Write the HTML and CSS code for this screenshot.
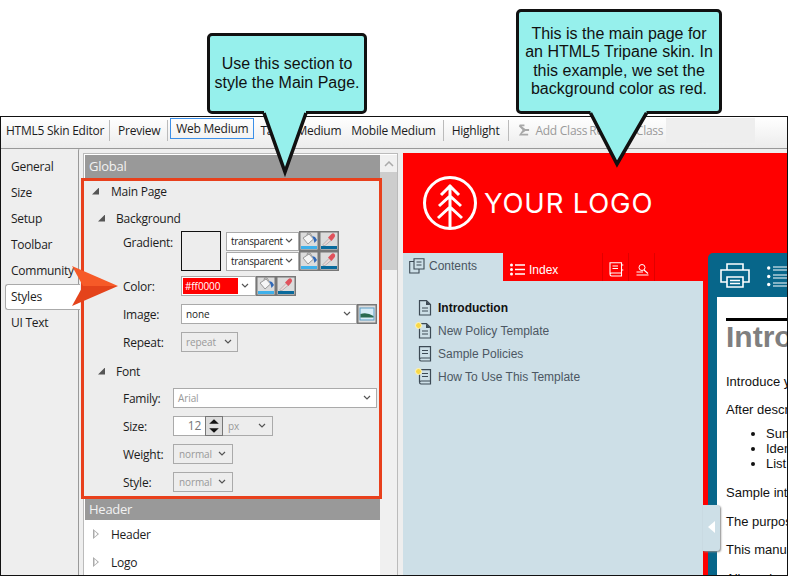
FILE: index.html
```html
<!DOCTYPE html>
<html lang="en">
  <head>
    <meta charset="UTF-8" />
    <title>HTML5 Skin Editor</title>
    <link rel="stylesheet" href="styles.css">
  </head>
  <body>
    <svg class="defs" width="0" height="0">
      <symbol id="bucket" viewBox="0 0 20 20">
        <rect width="20" height="20" fill="#dcdcdc"/>
        <path d="M4 7 L10 3 L14.500 8 L9 13 Z" fill="#f6f6f6" stroke="#999" stroke-width="1"/>
        <path d="M8 4 L8.500 2 L11 2 L13 5" fill="none" stroke="#999"/>
        <path d="M13 5 L16 6 L18 9 L15.500 12 L14.500 8 Z" fill="#2f68b8"/>
        <rect x="2" y="15" width="16" height="3" fill="#3fb0ea"/>
        <rect x=".75" y=".75" width="18.5" height="18.5" fill="none" stroke="#777" stroke-width="1.5"/>
      </symbol>
      <symbol id="dropper" viewBox="0 0 20 20">
        <rect width="20" height="20" fill="#dcdcdc"/>
        <path d="M4 13.500 L10 7.500 L12 9.500 L6 14.500 L4 14.500 Z" fill="#eed8d8" stroke="#aaa" stroke-width=".8"/>
        <path d="M9 6.500 L12 3.500 Q14 1.500 15.500 3 Q17 5 15 7 L12.500 10 Z" fill="#e0525c"/>
        <rect x="2" y="15" width="16" height="3" fill="#0a6a9c"/>
        <rect x=".75" y=".75" width="18.5" height="18.5" fill="none" stroke="#777" stroke-width="1.5"/>
      </symbol>
      <symbol id="chev" viewBox="0 0 8 5">
        <path d="M1 1 L4 4 L7 1" fill="none" stroke="#555" stroke-width="1.200"/>
      </symbol>
      <symbol id="doc" viewBox="0 0 14 16">
        <path d="M1.500 .700 H8.500 L12.500 4.500 V15 H1.500 Z" fill="none" stroke="#3d4a55" stroke-width="1.200"/>
        <path d="M8 .700 L12.500 5 H8 Z" fill="#3d4a55"/>
        <path d="M4 8 H10 M4 11 H10" stroke="#3d4a55"/>
      </symbol>
      <symbol id="book" viewBox="0 0 14 16">
        <path d="M1.500 13 V.700 H12.500 V15 H3 Q1.500 15 1.500 13 Q1.500 12 3 12 H12.500" fill="none" stroke="#3d4a55" stroke-width="1.200"/>
        <path d="M4 4.500 H10 M4 7.500 H10" stroke="#3d4a55"/>
      </symbol>
    </svg>

    <div class="window">
      <div class="toolbar">
        <span class="tool tool-title">HTML5 Skin Editor</span>
        <span class="sep"></span>
        <span class="tool tool-preview">Preview</span>
        <span class="sep"></span>
        <span class="tool tool-active">Web Medium</span>
        <span class="tool tool-tablet">Tablet Medium</span>
        <span class="tool tool-mobile">Mobile Medium</span>
        <span class="sep"></span>
        <span class="tool tool-high">Highlight</span>
        <span class="sep"></span>
        <svg class="add-icon" width="13" height="14" viewBox="0 0 14 14">
          <path d="M3 1 H8 V3 H5 L9 6 H13 V8 H9 L5 11 H12 V13 H2 L6 7 L2 3 Z" fill="#a8a8a8"/>
        </svg>
        <span class="tool tool-off">Add Class</span>
        <span class="tool tool-off tool-remove">Remove Class</span>
        <span class="tool-blank"></span>
      </div>

      <div class="main">
        <nav class="side">
          <a class="side-item">General</a>
          <a class="side-item">Size</a>
          <a class="side-item">Setup</a>
          <a class="side-item">Toolbar</a>
          <a class="side-item">Community</a>
          <a class="side-item side-on">Styles</a>
          <a class="side-item">UI Text</a>
        </nav>

        <section class="panel">
          <div class="panel-box">
            <div class="list">
              <div class="band">Global</div>
              <div class="group">
                <div class="tree"><i class="tri"></i>Main Page</div>
                <div class="tree tree-2"><i class="tri"></i>Background</div>

                <div class="prop prop-grad">
                  <span class="label label-w">Gradient:</span>
                  <span class="swatch"></span>
                  <div class="grad-rows">
                    <div class="pick">
                      <span class="combo combo-t">transparent<svg class="chev"><use href="#chev"/></svg></span>
                      <svg class="btn"><use href="#bucket"/></svg>
                      <svg class="btn"><use href="#dropper"/></svg>
                    </div>
                    <div class="pick">
                      <span class="combo combo-t">transparent<svg class="chev"><use href="#chev"/></svg></span>
                      <svg class="btn"><use href="#bucket"/></svg>
                      <svg class="btn"><use href="#dropper"/></svg>
                    </div>
                  </div>
                </div>

                <div class="prop prop-color">
                  <span class="label label-w">Color:</span>
                  <span class="combo combo-c"><span class="red-val">#ff0000</span><svg class="chev"><use href="#chev"/></svg></span>
                  <svg class="btn"><use href="#bucket"/></svg>
                  <svg class="btn"><use href="#dropper"/></svg>
                </div>

                <div class="prop prop-image">
                  <span class="label label-w">Image:</span>
                  <span class="combo combo-i">none<svg class="chev"><use href="#chev"/></svg></span>
                  <svg class="btn" viewBox="0 0 20 20">
                    <rect width="20" height="20" fill="#dcdcdc"/>
                    <rect x="3" y="4" width="14" height="12" fill="#d8ecf6" stroke="#5a9cc4"/>
                    <path d="M3.500 10 Q10 8 16.500 12 V13.500 H3.500 Z" fill="#2a6a50"/>
                    <rect x=".75" y=".75" width="18.5" height="18.5" fill="none" stroke="#777" stroke-width="1.5"/>
                  </svg>
                </div>

                <div class="prop prop-repeat">
                  <span class="label label-w">Repeat:</span>
                  <span class="combo combo-off combo-r">repeat<svg class="chev"><use href="#chev"/></svg></span>
                </div>

                <div class="tree tree-2 tree-font"><i class="tri"></i>Font</div>

                <div class="prop prop-family">
                  <span class="label">Family:</span>
                  <span class="combo combo-fam">Arial<svg class="chev"><use href="#chev"/></svg></span>
                </div>

                <div class="prop prop-gap">
                  <span class="label">Size:</span>
                  <span class="num">12</span>
                  <span class="spin"><i class="up"></i><i class="down"></i></span>
                  <span class="combo combo-off combo-px">px<svg class="chev"><use href="#chev"/></svg></span>
                </div>

                <div class="prop prop-gap">
                  <span class="label">Weight:</span>
                  <span class="combo combo-off combo-w">normal<svg class="chev"><use href="#chev"/></svg></span>
                </div>

                <div class="prop prop-gap">
                  <span class="label">Style:</span>
                  <span class="combo combo-off combo-w">normal<svg class="chev"><use href="#chev"/></svg></span>
                </div>
              </div>
              <div class="band band-h">Header</div>
              <div class="tree tree-closed"><i class="tri-open"></i>Header</div>
              <div class="tree tree-closed"><i class="tri-open"></i>Logo</div>
            </div>
            <div class="scroll">
              <svg class="scroll-up" width="10" height="6" viewBox="0 0 10 6"><path d="M1 5 L5 1 L9 5" fill="none" stroke="#aaa" stroke-width="1.500"/></svg>
              <div class="thumb"></div>
            </div>
          </div>
        </section>

        <section class="preview">
          <div class="logo-bar">
            <svg class="logo-mark" width="56" height="56" viewBox="0 0 56 56">
              <circle cx="28" cy="28" r="25.500" fill="none" stroke="#fff" stroke-width="3"/>
              <path d="M28 10 V53 M19 20 L28 11 L37 20 M17 31 L28 21 L39 31 M16 43 L28 32 L40 43" fill="none" stroke="#fff" stroke-width="3"/>
            </svg>
            <span class="logo-text">YOUR LOGO</span>
          </div>
          <div class="skin">
            <div class="nav-col">
              <div class="tabs">
                <span class="tab tab-on">
                  <svg width="16" height="16" viewBox="0 0 16 16"><path d="M5 3.500 H.700 V15 H10 V11 M5 .700 H15 V11 H5 Z M7.500 4 H12.500 M7.500 7 H12.500" fill="none" stroke="#3d4a55" stroke-width="1.100"/></svg>
                  Contents
                </span>
                <span class="tab tab-index">
                  <svg width="15" height="13" viewBox="0 0 15 13"><path d="M5 2 H15 M5 6.500 H15 M5 11 H15" stroke="#fff" stroke-width="1.300"/><circle cx="1.500" cy="2" r="1.500" fill="#fff"/><circle cx="1.500" cy="6.500" r="1.500" fill="#fff"/><circle cx="1.500" cy="11" r="1.500" fill="#fff"/></svg>
                  Index
                </span>
                <span class="tab tab-icon">
                  <svg width="15" height="15" viewBox="0 0 15 15"><path d="M1 12 V.700 H12.500 V14 H2.500 Q1 14 1 12 Q1 11 2.500 11 H12.500 M3.500 4 H9 M3.500 6.500 H9 M12.500 3 H14.300 M12.500 8 H14.300" fill="none" stroke="#fff" stroke-width="1.100"/></svg>
                </span>
                <span class="tab tab-icon">
                  <svg width="13" height="12" viewBox="0 0 13 12"><circle cx="6" cy="3.500" r="3" fill="none" stroke="#fff"/><path d="M8 6 L12 9.500 M.500 8 H7 M.500 11 H12.500" stroke="#fff" stroke-width="1.100"/></svg>
                </span>
              </div>
              <ul class="toc">
                <li class="toc-on"><span class="toc-ico"><svg width="14" height="16"><use href="#doc"/></svg></span>Introduction</li>
                <li><span class="toc-ico"><svg width="14" height="16"><use href="#doc"/></svg><i class="star"></i></span>New Policy Template</li>
                <li><span class="toc-ico"><svg width="14" height="16"><use href="#book"/></svg></span>Sample Policies</li>
                <li><span class="toc-ico"><svg width="14" height="16"><use href="#book"/></svg><i class="star"></i></span>How To Use This Template</li>
              </ul>
            </div>
            <div class="topic">
              <div class="topic-bar">
                <svg width="30" height="25" viewBox="0 0 30 25">
                  <path d="M7 7 V1 H23 V7 M7 19 H1 V7 H29 V19 H23 M7 14 H23 V24 H7 Z M10 17.500 H20 M10 20.500 H20" fill="none" stroke="#fff" stroke-width="1.600"/>
                </svg>
                <svg class="topic-list" width="24" height="24" viewBox="0 0 24 24">
                  <path d="M6 3 H24 M6 6 H24 M6 11 H24 M6 14 H24 M6 19 H24 M6 22 H24" stroke="#fff" stroke-width="1.200"/>
                  <circle cx="1.700" cy="4" r="1.700" fill="#fff"/><circle cx="1.700" cy="12.500" r="1.700" fill="#fff"/><circle cx="1.700" cy="20.500" r="1.700" fill="#fff"/>
                </svg>
              </div>
              <article class="page">
                <hr class="rule">
                <h1>Introduction</h1>
                <p class="p-first">Introduce your template</p>
                <p class="p-after">After describing the policy</p>
                <ul>
                  <li>Summary</li>
                  <li>Identify</li>
                  <li>List items</li>
                </ul>
                <p class="p-sample">Sample introduction</p>
                <p class="p-b">The purpose of this</p>
                <p class="p-c">This manual covers</p>
                <p class="p-d">All employees</p>
              </article>
            </div>
          </div>
        </section>
      </div>
    </div>

    <div class="collapse"><i></i></div>

    <div class="mark"></div>
    <svg class="arrow" width="48" height="40" viewBox="0 0 48 40">
      <path d="M1 0 L47 20 H12 Z" fill="#f65a28"/>
      <path d="M1 40 L47 20 H12 Z" fill="#e4431b"/>
    </svg>

    <div class="callout callout-a">
      Use this section to<br>style the Main Page.
      <svg class="tail" width="50" height="70" viewBox="0 0 50 70">
        <path d="M4 0 H46 V3 L25 62 L4 3 Z" fill="#96f0ec"/>
        <path d="M4 3 L25 62 L46 3" fill="none" stroke="#111" stroke-width="3.500"/>
      </svg>
    </div>
    <div class="callout callout-b">
      This is the main page for<br>an HTML5 Tripane skin. In<br>this example, we set the<br>background color as red.
      <svg class="tail" width="66" height="62" viewBox="0 0 66 62">
        <path d="M4.500 0 H60.500 V3 L31 54 L4.500 3 Z" fill="#96f0ec"/>
        <path d="M4.500 3 L31 54 L60.500 3" fill="none" stroke="#111" stroke-width="3.500"/>
      </svg>
    </div>
  </body>
</html>
```

FILE: styles.css
```css
* {
  box-sizing: border-box;
}
body {
  margin: 0;
  height: 576px;
  overflow: hidden;
  position: relative;
  background-color: white;
  font-family: "Open Sans", "Liberation Sans", sans-serif;
  font-size: 12px;
  letter-spacing: -.25px;
  color: #1c1c1c;
}
.defs {
  position: absolute;
}

.window {
  margin-top: 116px;
  height: 460px;
  border: 1px solid #111;
  background-color: #eeeeee;
  overflow: hidden;
}

/* toolbar */
.toolbar {
  display: flex;
  align-items: center;
  height: 32px;
  padding-left: 5px;
  padding-bottom: 5px;
  background: linear-gradient(#ffffff, #ececec);
  border-bottom: 1px solid #999;
}
.tool {
  white-space: nowrap;
}
.sep {
  width: 1px;
  height: 21px;
  margin: 0 8px 0 5px;
  background-color: #bbb;
}
.tool-preview {
  margin-right: 2px;
}
.tool-active {
  align-self: flex-start;
  margin: 1px 0 0 -6px;
  padding: 1px 5px 0;
  height: 21px;
  line-height: 18px;
  border: 1px solid #3b8fe8;
}
.tool-tablet {
  margin-left: 6px;
}
.tool-mobile {
  margin: 0 2px 0 10px;
}
.tool-high {
  margin-right: 4px;
}
.add-icon {
  margin: 0 5px 0 0;
}
.tool-off {
  color: #9a9a9a;
}
.tool-remove {
  margin-left: 2px;
}
.tool-blank {
  align-self: flex-start;
  width: 89px;
  height: 25px;
  margin: 1px 0 0 3px;
  background-color: #eeeeee;
}

.main {
  display: flex;
  height: 426px;
}

/* left tabs */
.side {
  width: 77px;
  flex: none;
  padding: 5px 0 0 4px;
}
.side-item {
  display: block;
  height: 26px;
  line-height: 26px;
  padding-left: 6px;
  white-space: nowrap;
}
.side-on {
  position: relative;
  width: 75px;
  background-color: white;
  line-height: 24px;
  padding-left: 5px;
  border: 1px solid #aaa;
  border-right: none;
  border-radius: 3px 0 0 3px;
}

/* style list */
.panel {
  width: 322px;
  flex: none;
  height: 428px;
  margin-top: -1px;
  padding: 5px 2px 0 4px;
  background-color: transparent;
  border-left: 1px solid #999;
  border-radius: 3px 0 0 0;
}
.panel-box {
  display: flex;
  height: 424px;
  border: 1px solid #bbb;
  padding-top: 1px;
  background-color: white;
}
.list {
  width: 296px;
  flex: none;
}
.band {
  height: 23px;
  line-height: 23px;
  margin-left: 1px;
  padding-left: 4px;
  background-color: #999999;
  color: #f2f2f2;
  font-size: 13px;
}
.band-h {
  height: 21px;
  line-height: 21px;
}
.group {
  background-color: #ededed;
  padding-bottom: 7px;
}
.tree {
  display: flex;
  align-items: center;
  height: 26px;
  padding-left: 8px;
  white-space: nowrap;
}
.tree-2 {
  margin-top: 1px;
  padding-left: 14px;
}
.tree-font {
  margin-top: 6px;
}
.tree-closed {
  height: 28px;
  padding-left: 9px;
}
.tri {
  width: 7px;
  height: 7px;
  margin-right: 12px;
  background-color: #555;
  clip-path: polygon(100% 0, 100% 100%, 0 100%);
}
.tree-2 .tri {
  margin-right: 11px;
}
.tri-open {
  width: 6px;
  height: 10px;
  margin-right: 12px;
  background-color: #aaa;
  clip-path: polygon(0 0, 100% 50%, 0 100%, 0 0, 25% 20%, 25% 80%, 75% 50%, 25% 20%);
}

.prop {
  display: flex;
  align-items: center;
  padding-left: 39px;
}
.label {
  width: 50px;
  flex: none;
}
.label-w {
  width: 58px;
}
.prop-grad {
  align-items: flex-start;
  height: 40px;
}
.prop-grad .label {
  padding-top: 3px;
}
.swatch {
  width: 40px;
  height: 40px;
  border: 1px solid #111;
}
.grad-rows {
  margin-left: 5px;
}
.pick {
  display: flex;
  align-items: center;
  height: 20px;
}
.prop-color {
  margin-top: 5px;
}
.prop-image,
.prop-repeat,
.prop-family,
.prop-gap {
  margin-top: 8px;
}
.prop-family {
  margin-top: 4px;
}
.btn {
  width: 20px;
  height: 20px;
  flex: none;
}
.combo {
  display: flex;
  align-items: center;
  justify-content: space-between;
  height: 20px;
  padding: 0 4px;
  background-color: white;
  border: 1px solid #aaa;
  font-size: 10px;
  letter-spacing: -.1px;
  white-space: nowrap;
}
.chev {
  width: 8px;
  height: 5px;
  flex: none;
  margin: -2px 1px 0 0;
}
.combo-t {
  width: 73px;
  height: 19px;
  padding-right: 4px;
  letter-spacing: -.3px;
}
.combo-c {
  width: 75px;
  padding: 0 5px 0 1px;
}
.red-val {
  width: 55px;
  height: 16px;
  line-height: 16px;
  padding-left: 2px;
  background-color: #ff0000;
  color: #fff;
}
.combo-i {
  width: 176px;
}
.combo-off {
  background-color: #ededed;
  color: #999;
}
.combo-r {
  width: 57px;
}
.combo-fam {
  width: 204px;
  color: #999;
}
.num {
  width: 32px;
  height: 20px;
  line-height: 18px;
  padding-right: 4px;
  text-align: right;
  background-color: white;
  border: 1px solid #aaa;
  border-right: none;
  color: #777;
}
.spin {
  display: flex;
  flex-direction: column;
  width: 18px;
  height: 20px;
  border: 1px solid #777;
  background-color: #ddd;
}
.spin i {
  flex: 1;
  background-color: #111;
  clip-path: polygon(50% 25%, 80% 75%, 20% 75%);
}
.spin .down {
  clip-path: polygon(20% 25%, 80% 25%, 50% 75%);
}
.combo-px {
  width: 50px;
  border-left: none;
  padding-left: 5px;
  padding-right: 5px;
}
.combo-w {
  width: 60px;
  padding-left: 5px;
  padding-right: 5px;
}

.scroll {
  width: 17px;
  flex: none;
  background-color: #f0f0f0;
  text-align: center;
}
.scroll-up {
  display: block;
  margin: 6px auto 5px;
}
.thumb {
  height: 98px;
  background-color: #cdcdcd;
}

/* skin preview */
.preview {
  width: 384px;
  flex: none;
  margin-left: 3px;
  padding-top: 4px;
  letter-spacing: 0;
}
.logo-bar {
  display: flex;
  align-items: center;
  height: 100px;
  padding-left: 19px;
  background-color: #ff0000;
}
.logo-text {
  margin-left: 6px;
  color: white;
  font-family: Inter, "Liberation Sans", sans-serif;
  font-size: 27.5px;
  letter-spacing: .8px;
  white-space: nowrap;
}
.skin {
  display: flex;
  height: 322px;
  background-color: #ff0000;
  font-family: "Liberation Sans", Arial, sans-serif;
}
.nav-col {
  width: 300px;
  flex: none;
}
.tabs {
  display: flex;
  height: 28px;
}
.tab {
  display: flex;
  align-items: center;
  gap: 5px;
  color: white;
}
.tab-on {
  width: 100px;
  height: 28px;
  padding: 0 0 2px 6px;
  background-color: #cddfe7;
  color: #4a5560;
  gap: 4px;
}
.tab-index {
  width: 100px;
  padding: 5px 0 0 7px;
  gap: 4px;
  border-right: 1px solid #e00000;
}
.tab-icon {
  justify-content: center;
  width: 26px;
  padding: 5px 0 0 1px;
  border-right: 1px solid #e00000;
}
.toc {
  list-style: none;
  margin: 0;
  padding: 15px 0 0 15px;
  height: 294px;
  background-color: #cddfe7;
  color: #4c5763;
}
.toc li {
  display: flex;
  align-items: center;
  height: 23px;
}
.toc-ico {
  position: relative;
  display: flex;
  width: 20px;
}
.toc-on {
  font-weight: bold;
  color: #111;
}
.star {
  position: absolute;
  left: -3px;
  top: -1px;
  width: 7px;
  height: 7px;
  border-radius: 50%;
  background-color: #f8d848;
  border: 1px solid #fff6c0;
}
.topic {
  width: 79px;
  flex: none;
  margin-left: 5px;
  padding-left: 9px;
  background-color: #07668a;
  border-radius: 5px 0 0 0;
  overflow: hidden;
}
.topic-bar {
  display: flex;
  align-items: center;
  height: 44px;
  margin-left: 3px;
  padding-top: 1px;
}
.topic-list {
  margin-left: 17px;
  flex: none;
}
.topic-bar svg {
  flex: none;
}
.page {
  height: 280px;
  padding: 21px 0 0 9px;
  background-color: white;
  font-size: 13px;
  line-height: 15px;
  color: #111;
  white-space: nowrap;
  overflow: hidden;
}
.rule {
  width: 100px;
  height: 3px;
  margin: 0;
  border: none;
  background-color: #000;
}
.page h1 {
  margin: -1px 0 0;
  font-size: 30px;
  line-height: 34px;
  color: #7f7f7f;
}
.page p {
  margin: 0;
}
.p-first {
  padding-top: 20px;
}
.p-after {
  padding-top: 13px;
}
.page ul {
  margin: 9px 0 0;
  padding-left: 40px;
}
.p-sample {
  padding-top: 14px;
}
.p-b,
.p-d {
  padding-top: 14px;
}
.p-c {
  padding-top: 13px;
}

/* overlays */
.collapse {
  position: absolute;
  left: 703px;
  top: 505px;
  width: 17px;
  height: 46px;
  background-color: #cddfe7;
  border-radius: 0 3px 3px 0;
  box-shadow: 1px 1px 2px #888;
}
.collapse i {
  position: absolute;
  left: 5px;
  top: 16px;
  width: 7px;
  height: 12px;
  background-color: white;
  clip-path: polygon(100% 0, 100% 100%, 0 50%);
}
.mark {
  position: absolute;
  left: 81px;
  top: 178px;
  width: 301px;
  height: 321px;
  border: 3px solid #e8401c;
}
.arrow {
  position: absolute;
  left: 71px;
  top: 266px;
}
.callout {
  position: absolute;
  display: flex;
  align-items: center;
  justify-content: center;
  border: 3.500px solid #111;
  border-radius: 5px;
  background-color: #96f0ec;
  color: #111;
  font-family: "Liberation Sans", Arial, sans-serif;
  font-size: 16px;
  letter-spacing: 0;
  line-height: 18.300px;
  text-align: center;
  white-space: nowrap;
}
.callout-a {
  left: 207px;
  top: 33px;
  width: 160px;
  height: 81px;
}
.callout-b {
  left: 516px;
  top: 9px;
  width: 206px;
  height: 105px;
}
.tail {
  position: absolute;
}
.callout-a .tail {
  left: 49.500px;
  top: 73.500px;
}
.callout-b .tail {
  left: 66.500px;
  top: 97.500px;
}
```
